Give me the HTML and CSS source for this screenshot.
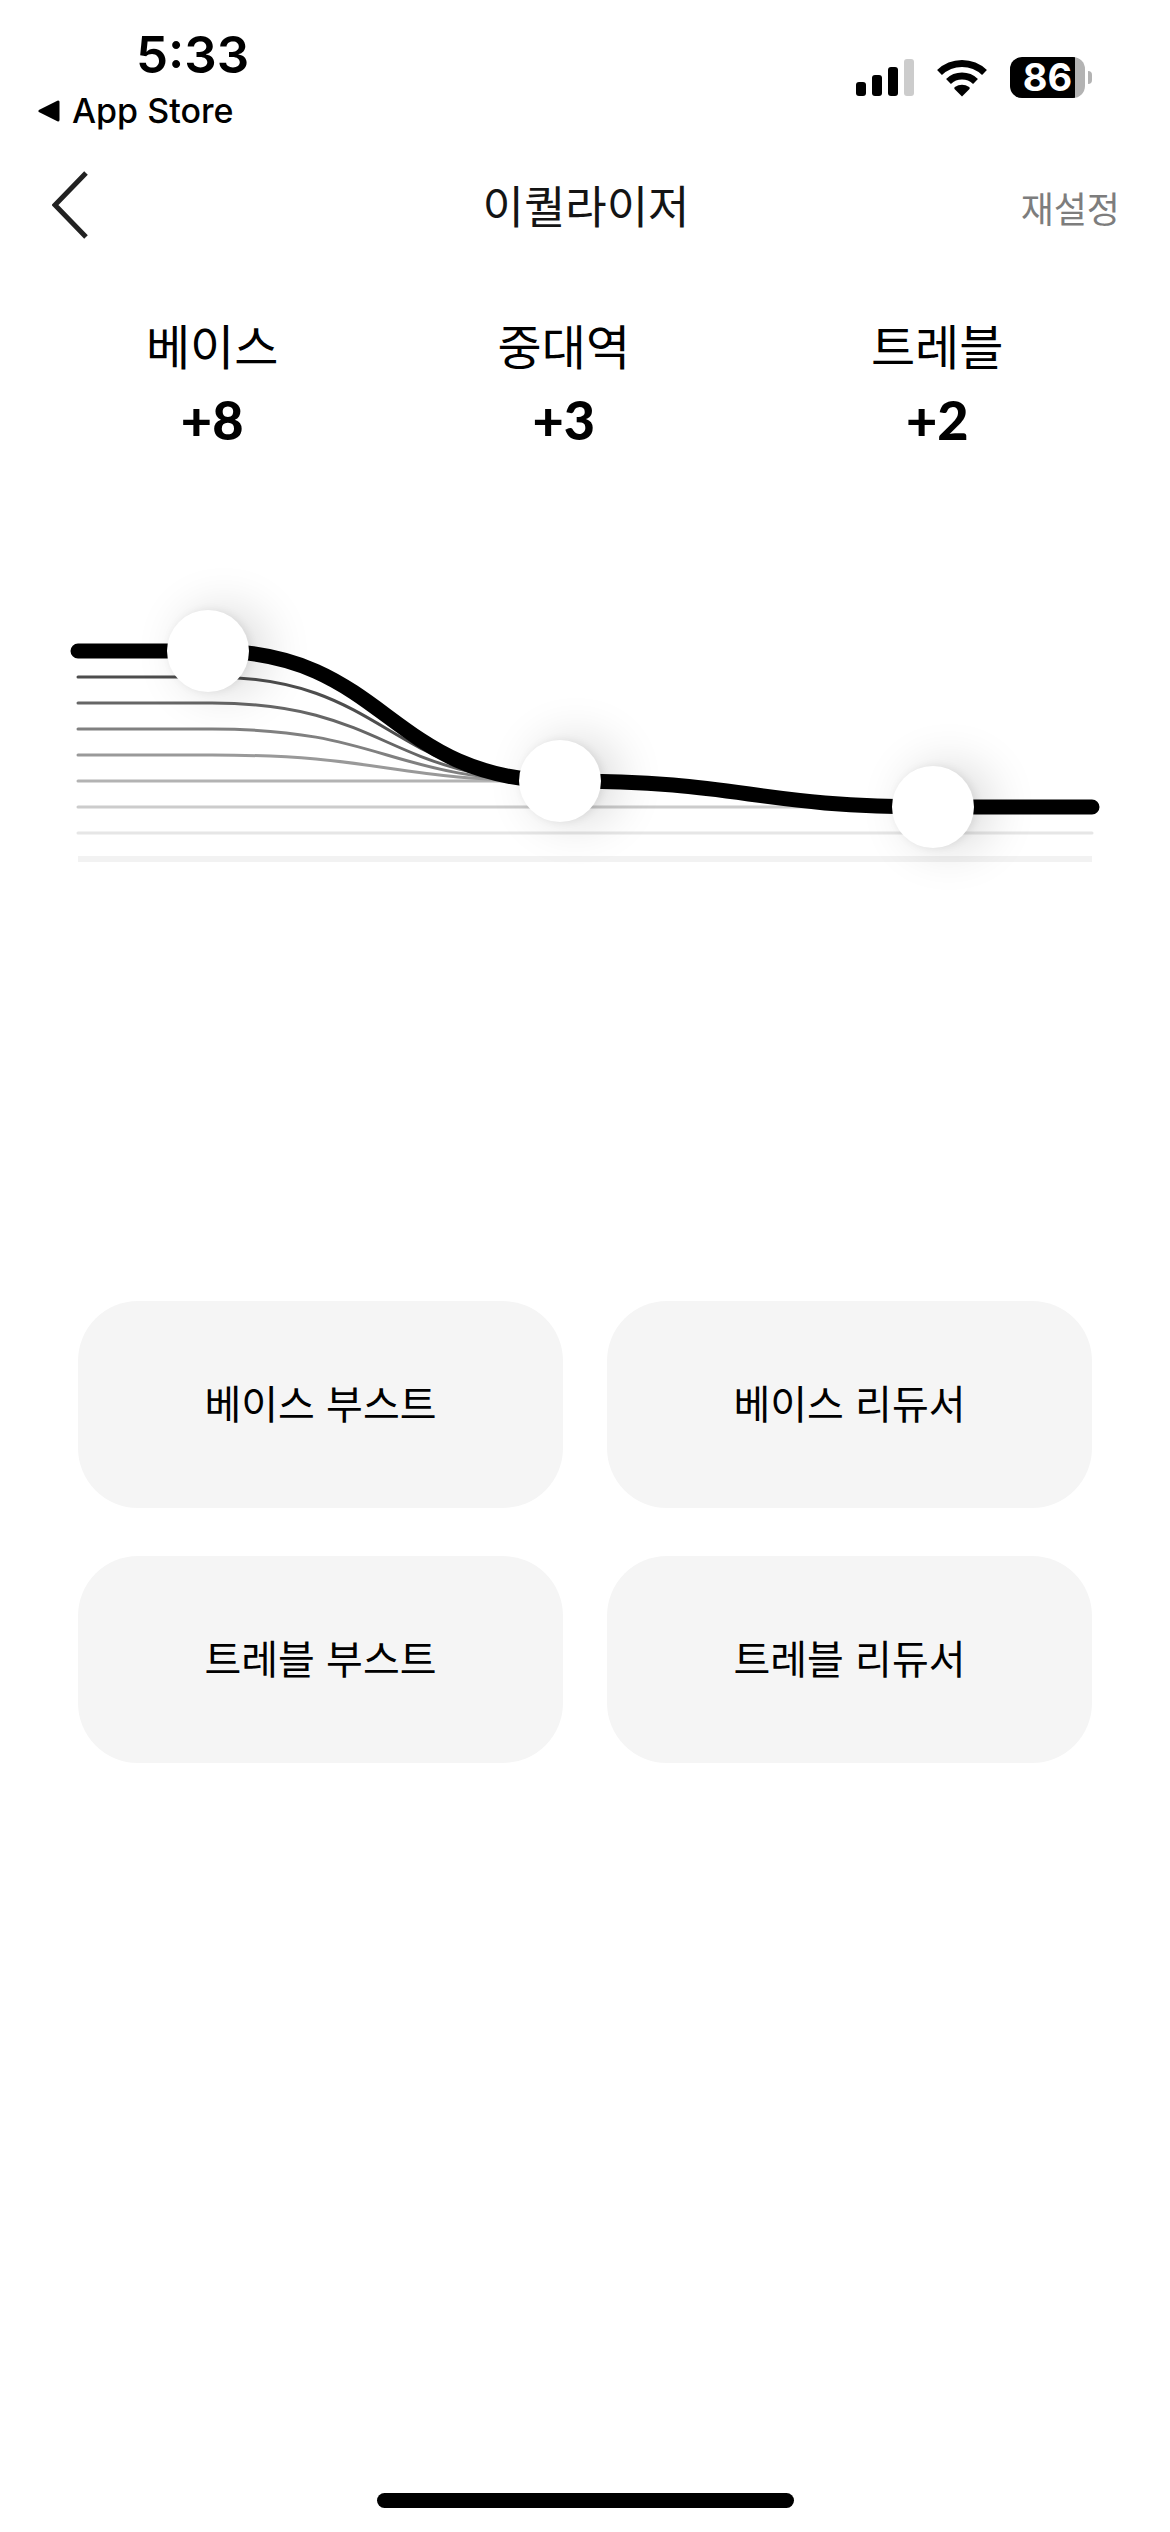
FILE: index.html
```html
<!DOCTYPE html>
<html lang="ko">
<head>
  <meta charset="UTF-8" />
  <meta name="viewport" content="width=device-width, initial-scale=1.0" />
  <title>이퀄라이저</title>
  <link rel="stylesheet" href="styles.css">
</head>
<body>

  <div class="status-bar">
    <div class="status-left">
      <div class="time">5:33</div>
      <a href="#" class="back-to-app">
        <svg width="22" height="22" viewBox="0 0 22 22"><path d="M20 2v18L2 11z" stroke="#000" stroke-width="3" stroke-linejoin="round" /></svg>
        App Store
      </a>
    </div>
    <div class="status-right">
      <svg width="58" height="38" viewBox="0 0 58 38">
        <rect x="0" y="23" width="10" height="14" rx="3" />
        <rect x="16" y="16" width="10" height="21" rx="3" />
        <rect x="32" y="8" width="10" height="29" rx="3" />
        <rect x="48" y="0" width="10" height="37" rx="3" fill="#ccc" />
      </svg>
      <svg width="52" height="38" viewBox="0 0 52 38">
        <path d="M26 37.5L18.5 30Q17.8 29 18.8 28Q26 23.5 33.2 28Q34.2 29 33.5 30Z" />
        <path d="M12.5 22.5a19.5 19.5 0 0 1 27 0" fill="none" stroke="#000" stroke-width="7" />
        <path d="M3.5 13.5a32.5 32.5 0 0 1 45 0" fill="none" stroke="#000" stroke-width="7" />
      </svg>
      <div class="battery">
        <div class="battery-body">86</div>
        <div class="battery-tip"></div>
      </div>
    </div>
  </div>

  <header class="navbar">
    <button type="button" class="back-btn" aria-label="뒤로">
      <svg width="36" height="68" viewBox="0 0 36 68"><path d="M34 2L3 34l31 32" fill="none" stroke="#222" stroke-width="5" /></svg>
    </button>
    <h1>이퀄라이저</h1>
    <button type="button" class="reset-btn">재설정</button>
  </header>

  <main>
    <div class="bands band-labels">
      <div class="band">
        <label for="bass">베이스</label>
        <output for="bass">+8</output>
      </div>
      <div class="band">
        <label for="mid">중대역</label>
        <output for="mid">+3</output>
      </div>
      <div class="band">
        <label for="treble">트레블</label>
        <output for="treble">+2</output>
      </div>
    </div>

    <div class="chart">
      <svg class="curves" viewBox="0 0 1170 602">
        <path d="M78 301H1092" stroke="#f2f2f2" stroke-width="6" />
        <g class="steps">
          <path d="M78 275H1092" stroke="#e6e6e6" />
          <path d="M78 249H1092" stroke="#ccc" />
          <path d="M78 223H562C749 223 749 249 936 249H1092" stroke="#b3b3b3" />
          <path d="M78 197H212C387 197 387 223 562 223" stroke="#999" />
          <path d="M78 171H212C387 171 387 223 562 223" stroke="#808080" />
          <path d="M78 145H212C387 145 387 223 562 223" stroke="#666" />
          <path d="M78 119H212C387 119 387 223 562 223" stroke="#4d4d4d" />
        </g>
        <path class="main-curve" d="M78 93H212C387 93 387 223 562 223C749 223 749 249 936 249H1092" />
      </svg>
      <div class="bands sliders">
        <input type="range" id="bass" min="-10" max="10" value="8" />
        <input type="range" id="mid" min="-10" max="10" value="3" />
        <input type="range" id="treble" min="-10" max="10" value="2" />
      </div>
    </div>

    <div class="presets">
      <button type="button">베이스 부스트</button>
      <button type="button">베이스 리듀서</button>
      <button type="button">트레블 부스트</button>
      <button type="button">트레블 리듀서</button>
    </div>
  </main>

  <div class="home-indicator"></div>

</body>
</html>
```
FILE: styles.css
```css
* {
  box-sizing: border-box;
}
body {
  margin: 0;
  min-height: 100vh;
  display: flex;
  flex-direction: column;
  background: #fff;
  color: #000;
  font-family: 'Noto Sans CJK KR', sans-serif;
}
button {
  border: none;
  padding: 0;
  background: none;
  font-family: inherit;
  cursor: pointer;
}
svg {
  display: block;
}

.status-bar {
  display: flex;
  justify-content: space-between;
  align-items: flex-start;
  padding: 24px 78px 0 38px;
  font-family: Inter, sans-serif;
}
.time {
  padding-left: 98px;
  font-size: 51px;
  line-height: 62px;
  font-weight: 600;
}
.back-to-app {
  display: flex;
  align-items: center;
  gap: 12px;
  margin-top: 5px;
  color: #000;
  font-size: 34px;
  line-height: 40px;
  font-weight: 500;
  text-decoration: none;
}
.status-right {
  display: flex;
  align-items: center;
  gap: 22px;
  padding-top: 33px;
}
.battery {
  display: flex;
  align-items: center;
  gap: 3px;
}
.battery-body {
  width: 75px;
  height: 41px;
  border-radius: 12px;
  background: linear-gradient(to right, #000 65px, #b3b3b3 65px);
  color: #fff;
  font-size: 38px;
  line-height: 41px;
  font-weight: 700;
  text-align: center;
}
.battery-tip {
  width: 4px;
  height: 13px;
  border-radius: 0 4px 4px 0;
  background: #b3b3b3;
}

.navbar {
  display: grid;
  grid-template-columns: 1fr auto 1fr;
  align-items: center;
  height: 132px;
  padding: 16px 50px 0 52px;
}
.back-btn {
  justify-self: start;
}
.navbar h1 {
  margin: 0;
  color: #141414;
  font-size: 45px;
  line-height: 68px;
  font-weight: 400;
}
.reset-btn {
  justify-self: end;
  padding-top: 4px;
  color: #7d7d7d;
  font-size: 36px;
}

/* bass / mid / treble columns, shared by labels and sliders */
.bands {
  display: grid;
  grid-template-columns: 32fr 33fr 36fr;
}
.band-labels {
  padding: 45px 38px 0 39px;
}
.band {
  display: flex;
  flex-direction: column;
  align-items: center;
}
.band label {
  font-size: 48px;
  line-height: 72px;
}
.band output {
  font-family: Lato, sans-serif;
  font-size: 54px;
  line-height: 80px;
  font-weight: 900;
}

.chart {
  position: relative;
  margin-top: 98px;
}
.curves {
  width: 100%;
  height: auto;
}
.steps path {
  fill: none;
  stroke-width: 3;
  stroke-linecap: round;
}
.main-curve {
  fill: none;
  stroke: #000;
  stroke-width: 15;
  stroke-linecap: round;
}
.sliders {
  position: absolute;
  inset: 0;
  justify-items: center;
  padding: 0 42px 0 35px;
}
.sliders input {
  -webkit-appearance: none;
  appearance: none;
  writing-mode: vertical-lr;
  direction: rtl;
  width: 82px;
  height: 100%;
  margin: 0;
  background: none;
}
.sliders input::-webkit-slider-thumb {
  -webkit-appearance: none;
  appearance: none;
  width: 82px;
  height: 82px;
  border-radius: 50%;
  background: #fff;
  box-shadow: 16px 0 50px rgba(0, 0, 0, 0.16), 2px 0 8px rgba(0, 0, 0, 0.08);
}

.presets {
  display: grid;
  grid-template-columns: 1fr 1fr;
  gap: 48px 44px;
  padding: 141px 78px 48px;
}
.presets button {
  height: 207px;
  padding-bottom: 6px;
  border-radius: 60px;
  background: #f5f5f5;
  color: #000;
  font-size: 40px;
}

.home-indicator {
  width: 417px;
  height: 15px;
  margin: auto auto 24px;
  border-radius: 8px;
  background: #000;
}
```
